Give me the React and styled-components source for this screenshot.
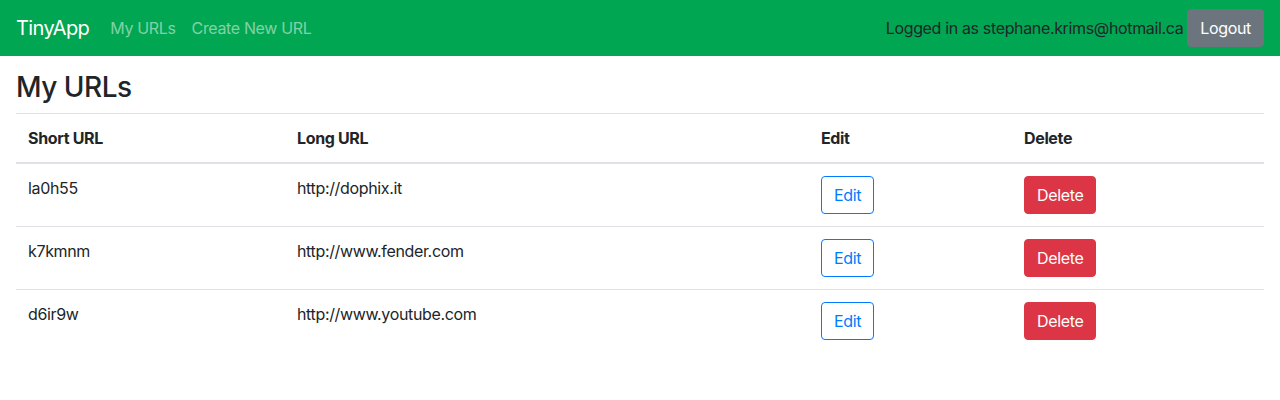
import React from 'react'
import styled, { createGlobalStyle } from 'styled-components'

const GlobalStyle = createGlobalStyle`
  body {
    margin: 0;
    font-family: Inter, Roboto, "Liberation Sans", sans-serif;
    font-size: 16px;
    line-height: 1.5;
    color: #212529;
    background: #fff;
    letter-spacing: -0.35px;
  }
`

const Navbar = styled.nav`
  display: flex;
  align-items: center;
  justify-content: space-between;
  height: 56px;
  padding: 0 16px;
  box-sizing: border-box;
  background: #00a651;
`

const Side = styled.div`
  display: flex;
  align-items: center;
`

const Brand = styled.a`
  font-size: 20px;
  color: #fff;
  margin-right: 13px;
  text-decoration: none;
  letter-spacing: -0.6px;
`

const NavLink = styled.a`
  padding: 8px;
  color: rgba(255, 255, 255, 0.5);
  text-decoration: none;
`

const UserText = styled.span`
  color: #212529;
  margin-right: 4px;
`

const Button = styled.button`
  font-family: inherit;
  font-size: 16px;
  line-height: 1.5;
  letter-spacing: inherit;
  height: 38px;
  padding: 0 12px;
  border-radius: 4px;
  border: 1px solid ${p => p.$border};
  background: ${p => p.$bg};
  color: ${p => p.$color};
  cursor: pointer;
`

const Main = styled.main`
  padding: 0 16px;
`

const Title = styled.h3`
  font-size: 28px;
  font-weight: 500;
  line-height: 1.2;
  margin: 15px 0 8px;
  letter-spacing: -0.5px;
`

const Table = styled.table`
  width: 100%;
  table-layout: fixed;
  border-collapse: collapse;
`

const Th = styled.th`
  text-align: left;
  font-weight: 700;
  padding: 12px;
  border-top: 1px solid #dee2e6;
  border-bottom: 2px solid #dee2e6;
  width: ${p => (p.$w ? `${p.$w}px` : 'auto')};
`

const Td = styled.td`
  padding: 12px;
  vertical-align: top;
  border-top: 1px solid #dee2e6;
`

const Row = styled.tr`
  &:first-child td {
    border-top: none;
  }
`

const urls = [
  { id: 'la0h55', long: 'http://dophix.it' },
  { id: 'k7kmnm', long: 'http://www.fender.com' },
  { id: 'd6ir9w', long: 'http://www.youtube.com' },
]

export default function App() {
  return (
    <>
      <GlobalStyle />
      <Navbar>
        <Side>
          <Brand href="#">TinyApp</Brand>
          <NavLink href="#">My URLs</NavLink>
          <NavLink href="#">Create New URL</NavLink>
        </Side>
        <Side>
          <UserText>Logged in as stephane.krims@hotmail.ca</UserText>
          <Button $bg="#6c757d" $border="#6c757d" $color="#fff">Logout</Button>
        </Side>
      </Navbar>
      <Main>
        <Title>My URLs</Title>
        <Table>
          <thead>
            <tr>
              <Th $w={245}>Short URL</Th>
              <Th $w={500}>Long URL</Th>
              <Th $w={179}>Edit</Th>
              <Th>Delete</Th>
            </tr>
          </thead>
          <tbody>
            {urls.map(u => (
              <Row key={u.id}>
                <Td>{u.id}</Td>
                <Td>{u.long}</Td>
                <Td>
                  <Button $bg="#fff" $border="#007bff" $color="#007bff">Edit</Button>
                </Td>
                <Td>
                  <Button $bg="#dc3545" $border="#dc3545" $color="#fff">Delete</Button>
                </Td>
              </Row>
            ))}
          </tbody>
        </Table>
      </Main>
    </>
  )
}
